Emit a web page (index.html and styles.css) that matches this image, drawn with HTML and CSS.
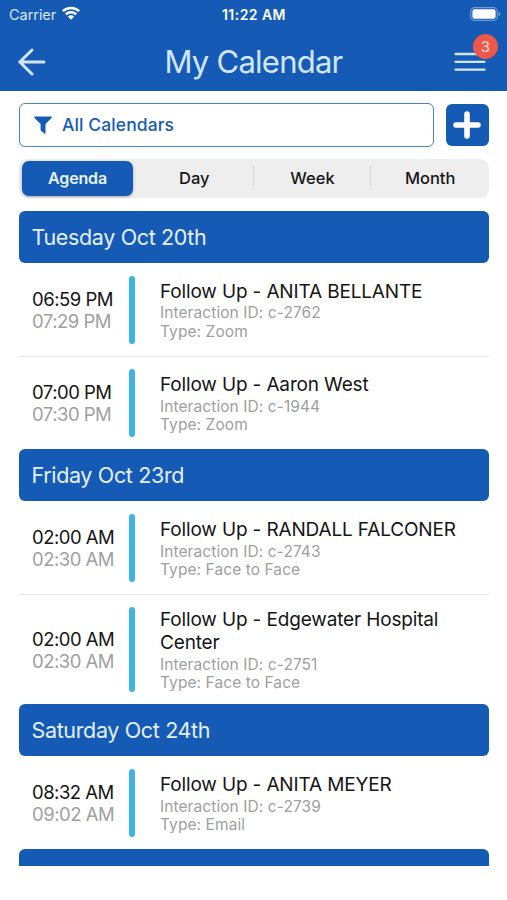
FILE: index.html
```html
<!DOCTYPE html>
<html lang="en">
<head>
<meta charset="utf-8">
<title>My Calendar</title>
<link rel="stylesheet" href="styles.css">
</head>
<body>
<header class="header">
  <div class="status">
    <div class="carrier"><span>Carrier</span>
      <svg class="wifi" width="18" height="14" viewBox="0 0 18 14"><g fill="none" stroke="#fff" stroke-width="2.5"><path d="M.9 5.2a11.6 11.6 0 0 1 16.2 0"/><path d="M3.8 8.4a7.4 7.4 0 0 1 10.4 0"/></g><path d="M5.9 10.6a4.4 4.4 0 0 1 6.2 0L9 13.8z" fill="#fff"/></svg>
    </div>
    <span class="clock">11:22 AM</span>
    <svg class="battery" width="31" height="14" viewBox="0 0 31 14"><rect x=".7" y=".7" width="26.6" height="12.6" rx="3.8" fill="none" stroke="#6f9bd8" stroke-width="1.2"/><rect x="2.4" y="2.2" width="23.2" height="9.6" rx="2.2" fill="#fff"/><path d="M28.7 4.8q1.8.8 1.8 2.2t-1.8 2.2z" fill="#6f9bd8"/></svg>
  </div>
  <div class="nav">
    <svg class="back" width="30" height="28" viewBox="0 0 30 28"><path d="M15 2 2.8 14 15 26M3 14h24" fill="none" stroke="#d3e5fb" stroke-width="3" stroke-linecap="round" stroke-linejoin="round"/></svg>
    <h1 class="title">My Calendar</h1>
    <div class="menu">
      <svg width="32" height="20" viewBox="0 0 32 20"><path d="M1.5 2h29M1.5 9.8h29M1.5 17.6h29" stroke="#d3e5fb" stroke-width="2.3" stroke-linecap="round"/></svg>
      <span class="badge">3</span>
    </div>
  </div>
</header>
<main class="content">
  <div class="toolbar">
    <div class="filter">
      <svg width="18" height="18" viewBox="0 0 18 18"><path d="M.9.5h16.2q1 .5.4 1.4L11.5 8v9.2q-.4.7-1.1.3L7 14.8q-.4-.4-.4-1V8L.5 1.9Q0 1 .9.5z" fill="#155bb5"/></svg>
      <span class="filter-label">All Calendars</span>
    </div>
    <div class="add"><svg width="28" height="28" viewBox="0 0 28 28"><path d="M14 3v22M3 14h22" stroke="#fff" stroke-width="5.6" stroke-linecap="round"/></svg></div>
  </div>
  <div class="tabs">
    <span class="tab active">Agenda</span>
    <span class="tab">Day</span>
    <span class="tab line">Week</span>
    <span class="tab line">Month</span>
  </div>
  <div class="agenda">
    <h2 class="day">Tuesday Oct 20th</h2>
    <article class="event">
      <div class="times"><span>06:59 PM</span><span class="end">07:29 PM</span></div><i class="bar"></i>
      <div class="info"><h3>Follow Up - ANITA BELLANTE</h3><p>Interaction ID: c-2762</p><p>Type: Zoom</p></div>
    </article>
    <article class="event split">
      <div class="times"><span>07:00 PM</span><span class="end">07:30 PM</span></div><i class="bar"></i>
      <div class="info"><h3>Follow Up - Aaron West</h3><p>Interaction ID: c-1944</p><p>Type: Zoom</p></div>
    </article>
    <h2 class="day">Friday Oct 23rd</h2>
    <article class="event">
      <div class="times"><span>02:00 AM</span><span class="end">02:30 AM</span></div><i class="bar"></i>
      <div class="info"><h3>Follow Up - RANDALL FALCONER</h3><p>Interaction ID: c-2743</p><p>Type: Face to Face</p></div>
    </article>
    <article class="event split tall">
      <div class="times"><span>02:00 AM</span><span class="end">02:30 AM</span></div><i class="bar"></i>
      <div class="info"><h3>Follow Up - Edgewater Hospital Center</h3><p>Interaction ID: c-2751</p><p>Type: Face to Face</p></div>
    </article>
    <h2 class="day">Saturday Oct 24th</h2>
    <article class="event">
      <div class="times"><span>08:32 AM</span><span class="end">09:02 AM</span></div><i class="bar"></i>
      <div class="info"><h3>Follow Up - ANITA MEYER</h3><p>Interaction ID: c-2739</p><p>Type: Email</p></div>
    </article>
    <h2 class="day"></h2>
  </div>
</main>
</body>
</html>
```
FILE: styles.css
```css
* { box-sizing: border-box; margin: 0; padding: 0; }
body { width: 507px; height: 900px; overflow: hidden; background: #fff; color: #151515; font-family: Inter, "Liberation Sans", sans-serif; }
svg { display: block; flex: none; }
.header { height: 91px; background: #155bb5; color: #fff; }
.status { height: 28px; padding: 0 10px 0 9px; display: grid; grid-template-columns: 1fr auto 1fr; align-items: center; }
.carrier { display: flex; align-items: center; gap: 6px; font-size: 14.5px; color: #d9e8fb; letter-spacing: -.05px; }
.wifi { margin-top: -2px; }
.clock { font-size: 14px; font-weight: 600; letter-spacing: .45px; padding-left: 2px; }
.battery { justify-self: end; margin-right: -4px; margin-top: -1px; }
.nav { height: 63px; padding: 0 20px 0 17px; display: grid; grid-template-columns: 1fr auto 1fr; align-items: center; }
.back { margin-top: 4px; }
.title { font-size: 31px; font-weight: 400; line-height: 40px; color: #d3e5fb; letter-spacing: -.75px; margin-top: 4px; padding-left: 3px; }
.menu { position: relative; justify-self: end; margin-top: 5px; margin-right: 1px; }
.badge { position: absolute; right: -12px; top: -18px; width: 25px; height: 25px; border-radius: 50%; background: #ef5848; color: #fbe0e0; font-size: 15px; line-height: 25px; text-align: center; }
.content { padding: 12px 18px 0 19px; }
.toolbar { display: flex; align-items: center; justify-content: space-between; height: 44px; }
.filter { width: 415px; height: 44px; border: 1.5px solid #4a81cb; border-radius: 6px; display: flex; align-items: center; gap: 10px; padding-left: 14px; color: #155bb5; }
.filter-label { font-size: 17.5px; font-weight: 500; letter-spacing: .1px; margin-top: -1px; }
.add { width: 43.5px; height: 42px; border-radius: 6px; background: #155bb5; display: grid; place-items: center; }
.tabs { margin-top: 12px; height: 39px; padding: 2px 1px 2px 3px; border-radius: 9px; background: #eee; display: grid; grid-template-columns: 113px repeat(3, 1fr); align-items: center; }
.tab { text-align: center; font-size: 16.5px; font-weight: 450; line-height: 26px; margin-top: -1px; padding-left: 1px; }
.tab.line { border-left: 1px solid #dcdcdc; }
.tab.active { height: 35px; line-height: 35px; margin: 0 2px 0 0; border-radius: 7px; background: #155bb5; color: #e8f1fc; font-size: 16px; font-weight: 600; letter-spacing: -.15px; padding-left: 0; box-shadow: 0 1px 3px rgba(0,0,0,.3); }
.agenda { margin-top: 13px; height: 655px; overflow: hidden; }
.day { height: 51.75px; padding-left: 12.5px; border-radius: 6px; background: #155bb5; color: #e4effd; font-size: 21.5px; font-weight: 400; line-height: 52px; letter-spacing: -.35px; }
.event { height: 93.3px; padding: 13px 0 12px 13px; display: flex; }
.event.tall { height: 110px; }
.split { border-top: 1.5px solid #e4e5e6; }
.event.split { padding-top: 12px; }
.times { width: 97px; display: flex; flex-direction: column; justify-content: center; font-size: 18.5px; line-height: 22px; letter-spacing: -.5px; white-space: nowrap; }
.end, .info p { color: #a0a0a0; }
.bar { width: 6px; border-radius: 3px; background: #40b4e0; }
.info { width: 310px; margin-left: 25px; display: flex; flex-direction: column; justify-content: center; }
.info h3 { font-size: 19px; font-weight: 400; line-height: 23px; letter-spacing: -.15px; }
.info p { position: relative; top: 1.6px; font-size: 15.5px; line-height: 18.7px; letter-spacing: .08px; }
```
